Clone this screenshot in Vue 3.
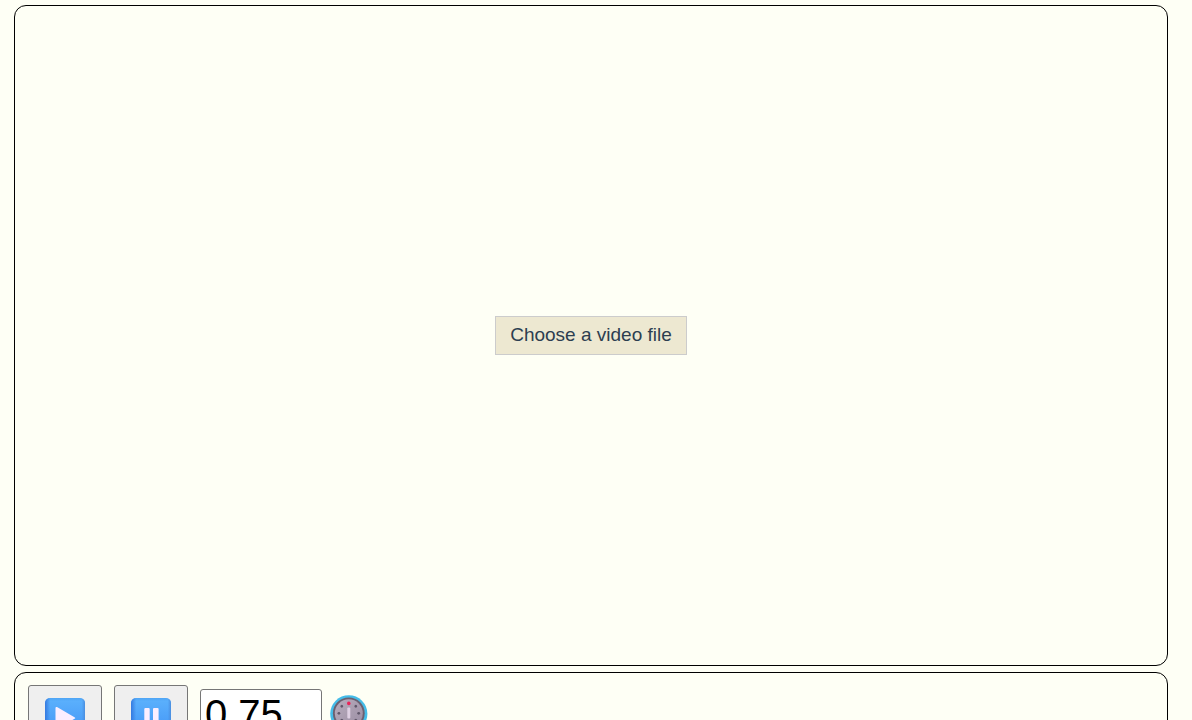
<script setup>
import { ref } from 'vue'

const speed = ref('0.75')
const dots = [0, 45, 90, 135, 180, 225, 270, 315]
</script>

<template>
  <main class="page">
    <section class="panel viewer">
      <button type="button" class="choose">Choose a video file</button>
    </section>
    <section class="panel controls">
      <button type="button" class="control" aria-label="Play">
        <svg class="emoji" viewBox="0 0 40 40" aria-hidden="true">
          <defs>
            <linearGradient id="tile" x1="0" y1="0" x2="0" y2="1">
              <stop offset="0" stop-color="#4fa5f5" />
              <stop offset="0.08" stop-color="#5aaffc" />
              <stop offset="1" stop-color="#3f91f5" />
            </linearGradient>
            <linearGradient id="edge" x1="0" y1="0" x2="1" y2="0">
              <stop offset="0" stop-color="#3479df" />
              <stop offset="0.13" stop-color="#3479df" stop-opacity="0" />
              <stop offset="0.92" stop-color="#4a8edf" stop-opacity="0" />
              <stop offset="1" stop-color="#4a8edf" />
            </linearGradient>
          </defs>
          <rect width="40" height="40" rx="5" fill="url(#tile)" />
          <rect width="40" height="40" rx="5" fill="url(#edge)" />
          <path d="M12 9 L29.5 19.2 Q31 20 29.5 20.8 L12 31 Q10.5 31.5 10.5 30 V10 Q10.5 8.5 12 9Z" fill="#fbeeff" />
        </svg>
      </button>
      <button type="button" class="control" aria-label="Pause">
        <svg class="emoji" viewBox="0 0 40 40" aria-hidden="true">
          <rect width="40" height="40" rx="5" fill="url(#tile)" />
          <rect width="40" height="40" rx="5" fill="url(#edge)" />
          <rect x="13.3" y="10" width="5.4" height="20" rx="1" fill="#fbeeff" />
          <rect x="22" y="10" width="5.6" height="20" rx="1" fill="#fbeeff" />
        </svg>
      </button>
      <input id="speed" v-model="speed" class="speed" type="text" inputmode="decimal" />
      <label for="speed" class="knob" aria-label="Playback speed">
        <svg viewBox="0 0 38 38" aria-hidden="true">
          <defs>
            <linearGradient id="dial" x1="0" y1="0" x2="1" y2="1">
              <stop offset="0" stop-color="#b8adbd" />
              <stop offset="1" stop-color="#9b8da3" />
            </linearGradient>
          </defs>
          <circle cx="18.8" cy="18.8" r="18.6" fill="#45bce8" />
          <circle cx="18.8" cy="18.3" r="15.9" fill="#6c6070" />
          <circle cx="18.8" cy="18.3" r="14" fill="url(#dial)" />
          <circle
            v-for="angle in dots"
            :key="angle"
            cx="18.8"
            cy="8.4"
            :r="angle === 0 ? 1.8 : 1.4"
            :fill="angle === 0 ? '#ec2459' : '#60576a'"
            :transform="`rotate(${angle} 18.8 18.3)`"
          />
          <rect x="17.3" y="12.6" width="3" height="11" rx="1" fill="#dfd1e3" />
        </svg>
      </label>
    </section>
  </main>
</template>

<style>
body {
  margin: 0;
  background: #fefff5;
}
</style>

<style scoped>
.page {
  box-sizing: border-box;
  height: 100vh;
  overflow: hidden;
  padding: 5px 24px 0 14px;
  font-family: "Liberation Sans", Arial, sans-serif;
}

.panel {
  box-sizing: border-box;
  display: flex;
  border: 1px solid #000;
  border-radius: 12px;
}

.viewer {
  min-height: calc(100vh - 59px);
  align-items: center;
  justify-content: center;
  margin-bottom: 6px;
}

.choose {
  padding: 7px 14px 9px;
  border: 1px solid #ccc;
  border-radius: 0;
  background: #ede8d1;
  color: #2c3e50;
  font-family: inherit;
  font-size: 19px;
  line-height: 21px;
}

.controls {
  align-items: flex-start;
  padding: 12px 13px;
}

.control {
  box-sizing: border-box;
  display: flex;
  align-items: center;
  justify-content: center;
  width: 74px;
  height: 66px;
  margin-right: 12px;
  padding: 0;
  border: 1px solid #767676;
  border-radius: 3px;
  background: #efefef;
}

.emoji {
  width: 40px;
  height: 40px;
}

.speed {
  box-sizing: border-box;
  width: 122px;
  height: 50px;
  margin-top: 4px;
  padding: 1px 4px;
  border: 1px solid #767676;
  border-radius: 3px;
  background: #fff;
  color: #000;
  font-family: inherit;
  font-size: 40px;
}

.knob {
  width: 38px;
  height: 38px;
  margin-top: 10px;
  margin-left: 8px;
}

.knob svg {
  display: block;
  width: 100%;
  height: 100%;
}
</style>
